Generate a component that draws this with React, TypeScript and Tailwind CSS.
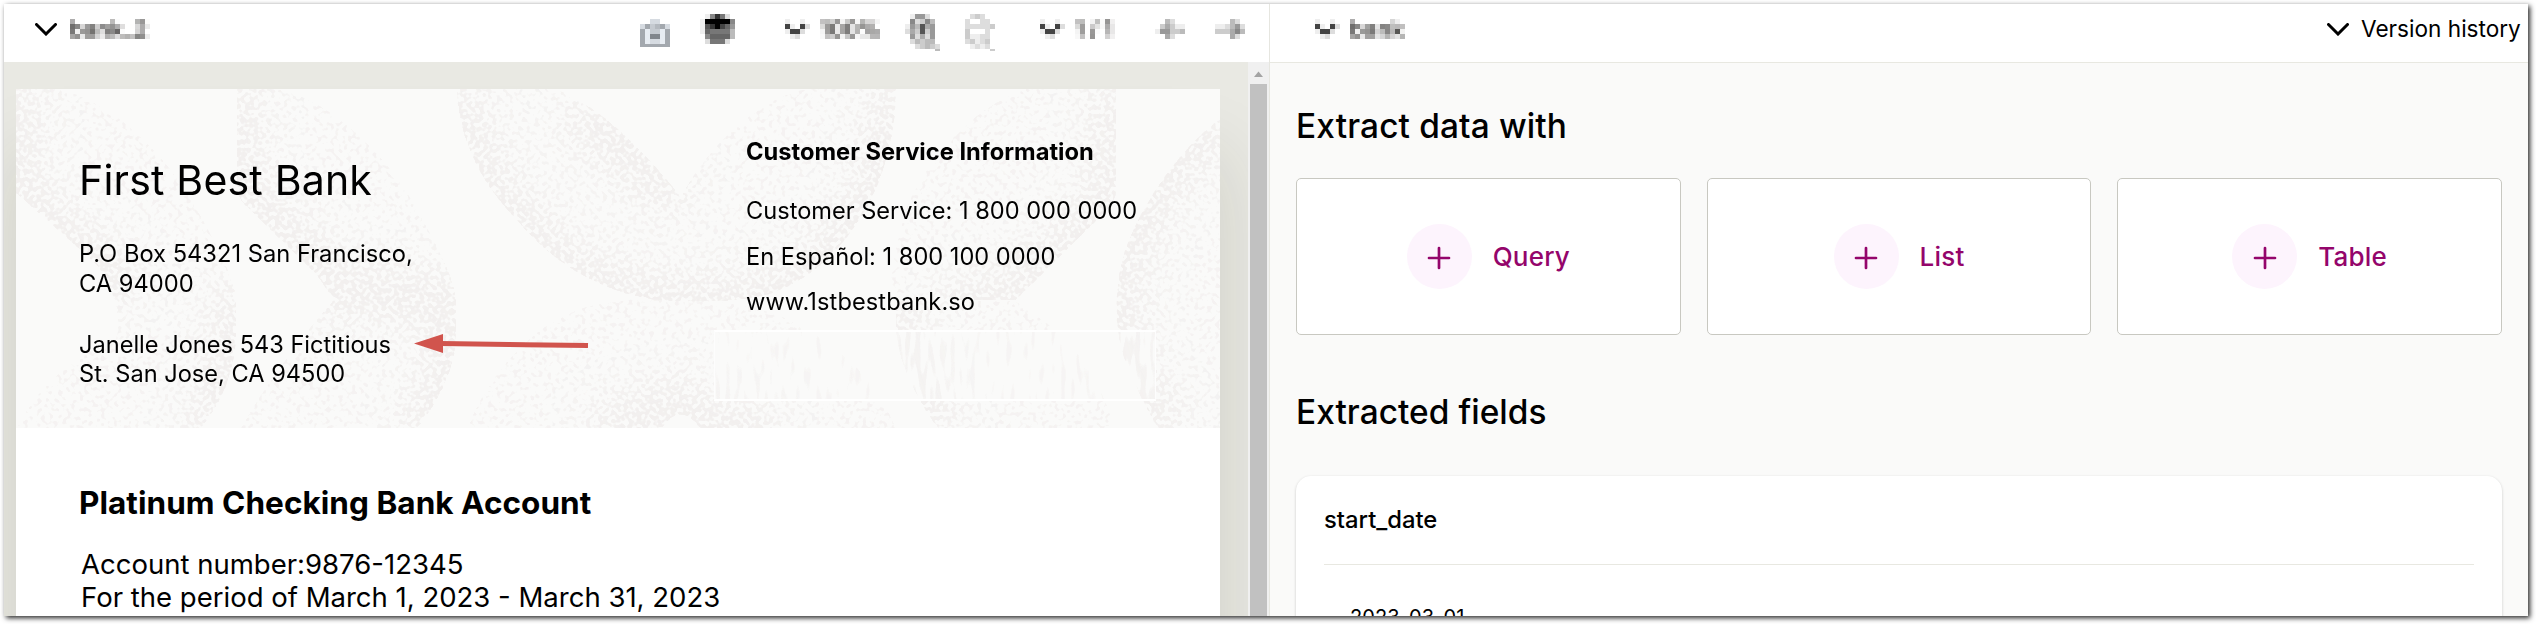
import type { ReactNode } from "react";
import { clsx } from "clsx";

/* Each character is one 5px cell: a hex digit is a grey level, "." is empty. */
const CHEVRON = ["e..e.", "4e.4d", "e44d.", ".ed.."];
const SCAN = ["..dd..", "dacbad", "aeccea", "ae88ea", "aeddea", "aaaaaa"];
const ERASER = [".e837d.", "e000008", "e530469", "e67777b", ".86666b", ".d777d."];
const ZOOM_IN = [".e99d..", ".8dc8b.", "e9b5a9.", "dac5c9.", ".9dad9.", ".dbcbb.", "..dcbcd", "......b"];
const ZOOM_OUT = [".dcd..", "d..dd.", "dddddc", "c...d.", "ceedd.", "dcedc.", ".eded.", ".....c"];
const ARROW_LEFT = ["..bd..", ".cacee", "e99ccb", "..ad.."];
const ARROW_RIGHT = ["...bd.", "eedb9d", "ccca8b", "...ad."];

function Mosaic({ rows, className, lastRow = 5, cool = false }: { rows: string[]; className: string; lastRow?: number; cool?: boolean }) {
  const cols = rows[0].length;
  const height = (rows.length - 1) * 5 + lastRow;
  return (
    <svg className={clsx("shrink-0", className)} width={cols * 5} height={height} shapeRendering="crispEdges" aria-hidden="true">
      {rows.flatMap((row, y) =>
        row.split("").map((c, x) => {
          if (c === ".") return null;
          const v = parseInt(c, 16) * 17;
          const fill = cool ? `rgb(${v - 7},${v - 2},${v + 4})` : `rgb(${v},${v},${v})`;
          return <rect key={`${x}-${y}`} x={x * 5} y={y * 5} width={5} height={5} fill={fill} />;
        }),
      )}
    </svg>
  );
}

function Chevron({ className }: { className: string }) {
  return (
    <svg className={clsx("shrink-0", className)} width="22" height="13" viewBox="0 0 22 13" fill="none" aria-hidden="true">
      <path d="M1.5 1.5 L11 11 L20.5 1.5" stroke="#000" strokeWidth="3" strokeLinecap="round" strokeLinejoin="miter" />
    </svg>
  );
}

function Filters() {
  return (
    <svg width="0" height="0" className="absolute" aria-hidden="true">
      <defs>
        <filter id="mosaic" filterUnits="userSpaceOnUse" primitiveUnits="userSpaceOnUse" x="0" y="0" width="90" height="20" colorInterpolationFilters="sRGB">
          <feGaussianBlur in="SourceGraphic" stdDeviation="1.7" result="soft" />
          <feFlood x="2" y="2" width="1" height="1" floodColor="#000" />
          <feComposite x="0" y="0" width="5" height="5" />
          <feTile x="0" y="0" width="90" height="20" result="dots" />
          <feComposite in="soft" in2="dots" operator="in" />
          <feMorphology operator="dilate" radius="2" />
        </filter>
      </defs>
    </svg>
  );
}

function MosaicText({ children, className }: { children: ReactNode; className: string }) {
  return (
    <div className={clsx("h-[20px] shrink-0 whitespace-nowrap text-[22px] font-medium leading-[20px] text-[#1a1816] [filter:url(#mosaic)]", className)}>
      {children}
    </div>
  );
}

const BANDS = [
  "M0 0H40C90 8 150 62 182 122C208 168 220 196 220 211V250C218 285 205 315 185 339H0C20 300 60 262 100 250C108 220 90 185 77 172L0 104Z",
  "M221 0H260C310 8 370 62 402 122C428 168 440 196 440 211V250C438 285 420 315 402 339H225C240 310 290 240 318 211L300 185L228 115Q221 108 221 95Z",
  "M441 0H540C590 20 635 70 665 108C690 60 740 10 790 0H880C880 60 860 130 800 180C750 218 710 212 655 212C600 210 540 180 500 130C460 90 441 40 441 0Z",
  "M1100 0H1010C960 15 910 70 890 120C880 160 870 190 878 211H1000L1092 120Q1100 112 1100 100Z",
  "M880 212H1000C1060 250 1085 290 1098 339H922C900 310 880 270 880 240Z",
  "M1204 30C1170 55 1140 95 1120 135C1100 175 1100 205 1101 235C1103 270 1125 310 1142 339H1204Z",
  "M452 339C465 300 510 235 570 218C620 205 700 205 760 225C820 250 860 290 880 339H684Q664 312 646 339Z",
];
const DENSE_EDGES = [
  "M0 0V104L77 172L110 205M220 200V250C218 285 205 315 185 345",
  "M221 0V95L318 200L440 212V250C438 285 420 315 402 345",
  "M441 0C445 40 460 90 500 130C540 180 600 210 655 212C710 212 750 218 800 180C860 130 880 60 880 0M560 20L665 110",
  "M1100 0V110L1000 211H930",
  "M880 212C880 270 900 310 925 345",
  "M1204 30C1170 55 1140 95 1120 135C1100 175 1100 205 1101 235C1103 270 1125 310 1150 345",
  "M580 345L646 320L664 315L684 335L760 345",
];

type SpeckleProps = { id: string; frequency: string; bias: number; x: number; y: number; width: number; height: number };

function Speckle({ id, frequency, bias, x, y, width, height }: SpeckleProps) {
  return (
    <svg className="absolute" style={{ left: x, top: y }} width={width} height={height} viewBox={`${x} ${y} ${width} ${height}`} aria-hidden="true">
      <defs>
        <filter id={id} filterUnits="userSpaceOnUse" x={x} y={y} width={width} height={height} colorInterpolationFilters="sRGB">
          <feTurbulence type="fractalNoise" baseFrequency={frequency} numOctaves={1} seed={7} />
          <feColorMatrix values="0 0 0 0 0  0 0 0 0 0  0 0 0 0 0  1 0 0 0 0" result="noise" />
          <feComposite in="noise" in2="SourceAlpha" operator="arithmetic" k1={0} k2={1} k3={0.27} k4={bias} />
          <feColorMatrix values="0 0 0 0 .949  0 0 0 0 .939  0 0 0 0 .935  0 0 0 10 0" result="grain" />
          <feComposite in="grain" in2="SourceAlpha" operator="in" result="a" />
          <feMerge>
            <feMergeNode in="a" />
            <feMergeNode in="a" />
          </feMerge>
        </filter>
        {BANDS.map((d, i) => (
          <clipPath key={i} id={`${id}-band-${i}`}>
            <path d={d} />
          </clipPath>
        ))}
        <filter id={`${id}-soft`} filterUnits="userSpaceOnUse" x="-60" y="-60" width="1330" height="460">
          <feGaussianBlur stdDeviation="17" />
        </filter>
      </defs>
      <g filter={`url(#${id})`}>
        {BANDS.map((d, i) => (
          <g key={i} clipPath={`url(#${id}-band-${i})`}>
            <path d={d} fill="#000" fillOpacity={0.42} />
            <path d={DENSE_EDGES[i]} fill="none" stroke="#000" strokeOpacity={0.8} strokeWidth={54} filter={`url(#${id}-soft)`} />
          </g>
        ))}
      </g>
    </svg>
  );
}

function LeftToolbar() {
  return (
    <header className="flex h-[58px] items-start bg-white">
      <Chevron className="ml-[31px] mt-[19px]" />
      <MosaicText className="ml-[13px] mt-[15px] w-[80px] tracking-[0.4px]">bank_2</MosaicText>
      <Mosaic rows={SCAN} className="ml-[490px] mt-[15px]" lastRow={3} cool />
      <Mosaic rows={ERASER} className="ml-[30px] mt-[10px]" />
      <Mosaic rows={CHEVRON} className="ml-[50px] mt-[15px]" />
      <MosaicText className="ml-[10px] mt-[15px] w-[65px] tracking-[0.4px]">100%</MosaicText>
      <Mosaic rows={ZOOM_IN} className="ml-[20px] mt-[10px]" lastRow={2} />
      <Mosaic rows={ZOOM_OUT} className="ml-[25px] mt-[10px]" lastRow={2} />
      <Mosaic rows={CHEVRON} className="ml-[45px] mt-[15px]" />
      <MosaicText className="ml-[10px] mt-[15px] w-[45px] tracking-[5.5px]">1/1</MosaicText>
      <Mosaic rows={ARROW_LEFT} className="ml-[35px] mt-[15px]" />
      <Mosaic rows={ARROW_RIGHT} className="ml-[30px] mt-[15px]" />
    </header>
  );
}

function BankDocument() {
  return (
    <div className="ml-[12px] mt-[27px] h-[700px] w-[1204px] shrink-0 bg-white shadow-[0_70px_70px_6px_rgba(40,40,20,0.12)]">
      <section className="relative h-[339px] overflow-hidden bg-[#fafaf9]">
        <Speckle id="grain" frequency="0.235" bias={-0.655} x={0} y={0} width={1204} height={339} />
        <div className="absolute left-[698px] top-[241px] h-[71px] w-[442px] overflow-hidden border-x border-y-2 border-x-white/60 border-y-white bg-[#fafaf9]">
          <div className="relative -left-[699px] -top-[243px] h-[339px] w-[1204px] opacity-70">
            <Speckle id="streaks" frequency="0.2 0.04" bias={-0.69} x={699} y={243} width={440} height={67} />
          </div>
        </div>
        <div className="relative flex">
          <div className="w-[667px] pl-[63px] pt-[67px]">
            <h1 className="text-[41px] leading-[48px] tracking-[0.2px]">First Best Bank</h1>
            <p className="mt-[35px] whitespace-pre-line text-[23.7px] leading-[29.5px]">{"P.O Box 54321 San Francisco,\nCA 94000"}</p>
            <p className="mt-[31.5px] whitespace-pre-line text-[23.6px] leading-[29.5px]">{"Janelle Jones 543 Fictitious\nSt. San Jose, CA 94500"}</p>
          </div>
          <div className="pl-[63px] pt-[48px]">
            <h2 className="text-[23.7px] font-bold leading-[30px]">Customer Service Information</h2>
            <div className="mt-[21px] text-[23.6px] leading-[45.5px]">
              <p>Customer Service: 1 800 000 0000</p>
              <p>En Español: 1 800 100 0000</p>
              <p className="tracking-[0.1px]">www.1stbestbank.so</p>
            </div>
          </div>
        </div>
        <svg className="absolute left-[397px] top-[244px]" width="176" height="22" viewBox="0 0 176 22" aria-hidden="true">
          <path d="M1 10.5L30 1V20Z" fill="#d1544d" />
          <path d="M28 10.5L175 12.5" stroke="#d1544d" strokeWidth="5" />
        </svg>
      </section>
      <section className="pl-[63px] pt-[57px]">
        <h2 className="text-[31.5px] font-bold leading-[36px] tracking-[0.04px]">Platinum Checking Bank Account</h2>
        <div className="mt-[27px] pl-[2px] text-[27.52px] leading-[33px]">
          <p>Account number:9876-12345</p>
          <p>For the period of March 1, 2023 - March 31, 2023</p>
        </div>
      </section>
    </div>
  );
}

function ExtractButton({ label }: { label: string }) {
  return (
    <button type="button" className="flex h-[157px] items-center justify-center rounded-[5px] border border-[#c8c8c1] bg-white">
      <span className="flex size-[65px] items-center justify-center rounded-full bg-[#fdf4fd]">
        <svg className="mt-[3px]" width="24" height="24" viewBox="0 0 24 24" fill="none" aria-hidden="true">
          <path d="M12 2V22M2 12H22" stroke="#94056b" strokeWidth="2.7" strokeLinecap="round" />
        </svg>
      </span>
      <span className="ml-[21px] text-[26px] font-medium leading-[32px] tracking-[0.2px] text-[#94056b]">{label}</span>
    </button>
  );
}

export default function App() {
  return (
    <div className="h-[624px] w-[2536px] overflow-hidden bg-white pl-[4px] pt-[4px] font-['Inter',sans-serif] text-black">
      <Filters />
      <div className="flex h-[612px] w-[2524px] overflow-hidden bg-white shadow-[2px_2px_5px_rgba(0,0,0,0.85)]">
        <div className="flex w-[1266px] shrink-0 flex-col border-r border-[#e6e6e0]">
          <LeftToolbar />
          <div className="flex min-h-0 flex-1 bg-[#e9e9e3]">
            <div className="w-[1244px] overflow-hidden">
              <BankDocument />
            </div>
            <div className="flex w-[21px] flex-col bg-[#f0f0f0] pl-[2px]">
              <svg width="17" height="22" viewBox="0 0 17 22" aria-hidden="true">
                <path d="M4 15L8.5 9.5L13 15Z" fill="#a3a3a3" />
              </svg>
              <div className="w-[17px] flex-1 bg-[#c1c1c1]" />
            </div>
          </div>
        </div>
        <div className="flex min-w-0 flex-1 flex-col bg-[#fafaf9]">
          <header className="flex h-[59px] shrink-0 items-start border-b border-[#e8e8e1] bg-white">
            <Mosaic rows={CHEVRON} className="ml-[45px] mt-[15px]" />
            <MosaicText className="ml-[10px] mt-[15px] w-[60px] tracking-[0.7px]">bank</MosaicText>
            <Chevron className="ml-[917px] mt-[19px]" />
            <span className="ml-[12px] mt-[10.5px] whitespace-nowrap text-[22.6px] leading-[28px]">Version history</span>
          </header>
          <main className="pl-[26px] pr-[26px] pt-[43px]">
            <h2 className="text-[33.4px] font-medium leading-[40px] tracking-[0.15px]">Extract data with</h2>
            <div className="mt-[32px] grid grid-cols-3 gap-[26px]">
              <ExtractButton label="Query" />
              <ExtractButton label="List" />
              <ExtractButton label="Table" />
            </div>
            <h2 className="mt-[57px] text-[33.4px] font-medium leading-[40px] tracking-[0.05px]">Extracted fields</h2>
            <div className="mt-[44px] h-[220px] rounded-[15px] bg-white px-[28px] pt-[30px] shadow-[0_1px_3px_rgba(0,0,0,0.2)]">
              <h3 className="text-[23.8px] font-medium leading-[28px]">start_date</h3>
              <div className="mt-[30px] border-t border-[#e8e8e1] pl-[26px] pt-[39px]">
                <p className="text-[20px] leading-[26px] tracking-[0.1px]">2023-03-01</p>
              </div>
            </div>
          </main>
        </div>
      </div>
    </div>
  );
}
